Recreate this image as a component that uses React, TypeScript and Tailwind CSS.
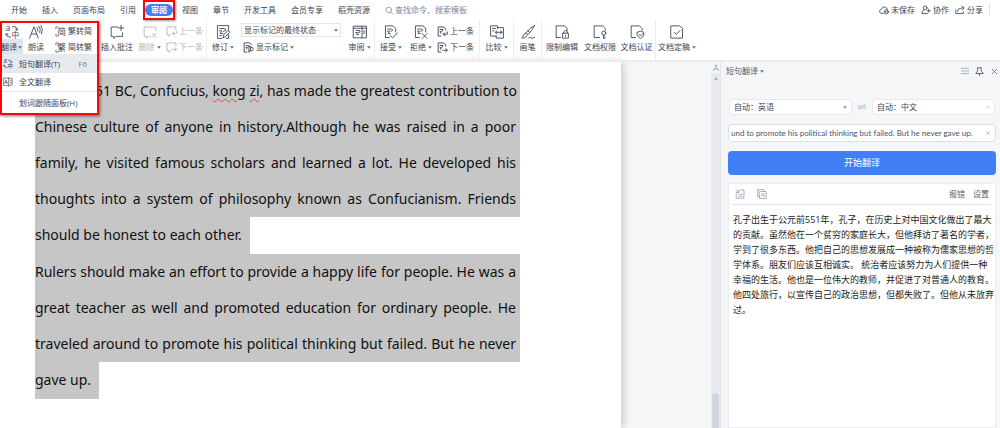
import { useState } from "react";
import type { ReactNode } from "react";
import { X } from "lucide-react";

type IconProps = { children: ReactNode; className?: string };

// all ribbon icons share a 48 unit grid
const Icon = ({ children, className = "h-[14px] w-[14px]" }: IconProps) => (
    <svg
        viewBox="0 0 48 48"
        className={`shrink-0 overflow-visible ${className}`}
        fill="none"
        stroke="currentColor"
        strokeWidth="3"
        strokeLinecap="round"
        strokeLinejoin="round"
        aria-hidden="true"
    >
        {children}
    </svg>
);

const Glyph = ({ x, y, size, children }: { x: number; y: number; size: number; children: string }) => (
    <text x={x} y={y} fontSize={size} fill="currentColor" stroke="none">
        {children}
    </text>
);

const Caret = ({ className = "text-[#6b7385]" }: { className?: string }) => (
    <svg viewBox="0 0 8 5" className={`h-[3px] w-1 shrink-0 ${className}`} fill="currentColor" aria-hidden="true">
        <path d="M0 0h8L4 5z" />
    </svg>
);

const TranslateIcon = ({ className }: { className?: string }) => (
    <Icon className={className}>
        <Glyph x={2} y={21} size={30}>a</Glyph>
        <Glyph x={22} y={45} size={26}>中</Glyph>
        <path d="M25 6h9q6 0 6 7v5M35 13l5 5 5-5M20 41h-7q-7 0-7-7v-5M1 34l5-5 5 5" />
    </Icon>
);

const ReadIcon = () => (
    <Icon>
        <path d="M2 45L17 6l15 39M8 31h18" />
        <path d="M27 8q5 5 3 13M34 4q8 9 3 22M41 2q9 12 2 28" />
    </Icon>
);

const BracketIcon = ({ char }: { char: string }) => (
    <Icon className="h-[11px] w-[11px]">
        <Glyph x={10} y={40} size={38}>{char}</Glyph>
        <path d="M12 4H4v8M4 36v8h8" />
    </Icon>
);

const CommentAddIcon = () => (
    <Icon>
        <path d="M27 7H4v32h9v7l8-7h22V27M38 1v18M29 10h18" />
    </Icon>
);

const CommentDeleteIcon = () => (
    <Icon>
        <path d="M44 20V7H4v32h9v7l8-7h5M32 29l13 13M45 29L32 42" />
    </Icon>
);

const CommentStepIcon = ({ next }: { next?: boolean }) => (
    <Icon className="h-[11px] w-[11px]">
        <path d="M43 18V4H4v34h9v7l7-7" strokeWidth="4" />
        <path d={next ? "M26 32h20M39 25l7 7-7 7" : "M46 24v9H28M35 26l-7 7 7 7"} strokeWidth="4" />
    </Icon>
);

const ReviseIcon = () => (
    <Icon>
        <path d="M20 46H5V2h38v16M13 12h15q6 0 5 7l-8 3M12 20h8l-6 9h10M13 36h6M24 43l3-10 14-14 6 6-14 14zM43 33v13h-8" />
    </Icon>
);

const ShowMarkupIcon = () => (
    <Icon className="h-[11px] w-[11px]">
        <path d="M17 44H5V4h24l9 9M13 16h12M13 24h6l-4 7" strokeWidth="4" />
        <path d="M26 19v26M26 19h7v20h-7M35 22q11 1 10 10-1 7-9 7" strokeWidth="4" />
    </Icon>
);

const ReviewPaneIcon = () => (
    <Icon>
        <path d="M2 4h29v40H2zM31 4h15v40H31M2 11h44M10 19h12q3 0 2 5l-5 2M9 26h7l-4 7h7M36 21h5M36 28h5" />
    </Icon>
);

const RevisionIcon = ({ mark }: { mark: "accept" | "reject" }) => (
    <Icon>
        <path d="M18 43H5V3h26l9 9v12M13 14h13q4 0 3 5l-5 3M12 21h7l-5 8h7" />
        <path d={mark === "accept" ? "M21 36l9 8 16-17" : "M28 29l17 17M45 29L28 46"} />
    </Icon>
);

const RevisionStepIcon = ({ next }: { next?: boolean }) => (
    <Icon className="h-[11px] w-[11px]">
        <path d="M17 44H5V4h24l9 9v5M13 15h13l-4 8M13 25h6l-3 7" strokeWidth="4" />
        <path d={next ? "M25 36h20M38 29l7 7-7 7" : "M45 26v10H27M34 29l-7 7 7 7"} strokeWidth="4" />
    </Icon>
);

const CompareIcon = () => (
    <Icon>
        <path d="M21 38H2V3h24v8M26 9h20v36H21v-8M9 12h10M9 20h5M19 25h22M24 20l-6 5 6 5M36 20l6 5-6 5" />
    </Icon>
);

const BrushIcon = () => (
    <Icon>
        <path d="M46 2Q32 8 17 27l7 6Q39 17 46 2zM16 28q-8 2-8 9-1 5-6 7 15 3 19-9M26 44q4-5 8 0 4 4 8 0l5-2M23 20l7 6" />
    </Icon>
);

const LockDocIcon = () => (
    <Icon>
        <path d="M19 43H4V3h29l8 8v9M27 28h19v17H27zM30 28v-5q6-9 13 0v5M36 35v4" />
    </Icon>
);

const KeyDocIcon = () => (
    <Icon>
        <path d="M22 43H4V3h29l9 9v6M36 35v11h5M36 41h5" />
        <circle cx="37" cy="28" r="7" />
    </Icon>
);

const ShieldDocIcon = () => (
    <Icon>
        <path d="M19 43H4V3h29l9 9v5M25 25l11-4 11 4v9q-2 8-11 12-9-4-11-12zM31 32l5 5 7-7" />
    </Icon>
);

const FinalDocIcon = () => (
    <Icon>
        <path d="M4 3h30l9 9v33H4zM15 25l7 7 12-13" />
    </Icon>
);

const PageIcon = () => (
    <Icon className="h-[10px] w-[10px]">
        <path d="M25 5H3v36h22M27 2v44M31 8h13v31H31" />
        <path d="M9 32l6-18 6 18M11 26h8M34 18h6M34 27h6" />
    </Icon>
);

type BigProps = { icon: ReactNode; label: string; caret?: boolean; className: string };

const BigButton = ({ icon, label, caret, className }: BigProps) => (
    <button className={`flex shrink-0 flex-col items-center justify-start pt-[5px] ${className}`}>
        {icon}
        <span className="mt-0.5 flex h-3 items-center gap-0.5 whitespace-nowrap">
            {label}
            {caret && <Caret />}
        </span>
    </button>
);

const SmallButton = ({ icon, label, caret }: { icon: ReactNode; label: string; caret?: boolean }) => (
    <button className="flex h-4 items-center gap-0.5 whitespace-nowrap">
        {icon}
        {label}
        {caret && <Caret />}
    </button>
);

const tabs = ["开始", "插入", "页面布局", "引用", "审阅", "视图", "章节", "开发工具", "会员专享", "稻壳资源"];

const translation = [
    "孔子出生于公元前551年，孔子，在历史上对中国文化做出了最大",
    "的贡献。虽然他在一个贫穷的家庭长大，但他拜访了著名的学者，",
    "学到了很多东西。他把自己的思想发展成一种被称为儒家思想的哲",
    "学体系。朋友们应该互相诚实。 统治者应该努力为人们提供一种",
    "幸福的生活。他也是一位伟大的教师，并促进了对普通人的教育。",
    "他四处旅行，以宣传自己的政治思想，但都失败了。但他从未放弃",
    "过。",
];

const Misspelt = ({ children }: { children: string }) => (
    <span className="underline decoration-[#e04848] decoration-wavy decoration-1 underline-offset-2">{children}</span>
);

const paragraphs: ReactNode[][] = [
    [
        <>
            <span className="inline-block w-[60px]" />
            51 BC, Confucius, <Misspelt>kong</Misspelt> <Misspelt>zi</Misspelt>, has made the greatest contribution to
        </>,
        "Chinese culture of anyone in history.Although he was raised in a poor",
        "family, he visited famous scholars and learned a lot. He developed his",
        "thoughts into a system of philosophy known as Confucianism. Friends",
        "should be honest to each other.",
    ],
    [
        "Rulers should make an effort to provide a happy life for people. He was a",
        "great teacher as well and promoted education for ordinary people. He",
        "traveled around to promote his political thinking but failed. But he never",
        "gave up.",
    ],
];

const TabBar = ({ active, onSelect }: { active: string; onSelect: (tab: string) => void }) => (
    <div className="flex h-5 items-center justify-between pl-[11px] pr-2.5">
        <nav className="flex items-center gap-[15px]">
            {tabs.map((tab) =>
                tab === active ? (
                    <div key={tab} className="relative -mx-1.5">
                        <button className="flex h-3 items-center rounded-full bg-[#417ff9] px-1.5 font-bold text-white">{tab}</button>
                        <span className="pointer-events-none absolute -inset-x-0.5 -inset-y-1 border-2 border-[#f50a0a] shadow-[1px_1px_2px_#0006]" />
                    </div>
                ) : (
                    <button key={tab} onClick={() => onSelect(tab)}>{tab}</button>
                )
            )}
            <label className="flex items-center gap-px text-[#7d879c]">
                <Icon className="h-[9px] w-[9px]">
                    <circle cx="20" cy="21" r="15" strokeWidth="4" />
                    <path d="M31 33l11 11" strokeWidth="4" />
                </Icon>
                <input className="w-20 bg-transparent outline-none placeholder:text-[#7d879c]" placeholder="查找命令、搜索模板" aria-label="查找命令" />
            </label>
        </nav>
        <div className="flex items-center gap-1.5 whitespace-nowrap">
            <button className="flex items-center gap-0.5">
                <Icon className="h-[10px] w-[10px]">
                    <path d="M21 40H11Q1 38 3 28q2-7 9-8Q16 7 28 9q12 3 12 14" strokeWidth="4" />
                    <circle cx="35" cy="33" r="10" strokeWidth="4" />
                    <path d="M30 33h10" strokeWidth="4" />
                </Icon>
                未保存
            </button>
            <button className="flex items-center gap-0.5">
                <Icon className="h-[10px] w-[10px]">
                    <circle cx="20" cy="14" r="9" strokeWidth="4" />
                    <path d="M14 23q-10 5-10 18h27M37 20v15M30 28h15" strokeWidth="4" />
                </Icon>
                协作
            </button>
            <button className="flex items-center gap-0.5 border-r border-[#dfe1e6] pr-1.5">
                <Icon className="h-[10px] w-[10px]">
                    <path d="M4 23v18h36v-9M11 31q3-17 22-17h9M34 5l10 9-10 9" strokeWidth="4" />
                </Icon>
                分享
            </button>
        </div>
    </div>
);

const TranslateMenu = () => (
    <div className="absolute left-0 top-[34px] z-10 w-[97px] bg-white text-[#3c4353]">
        <button className="flex h-[19px] w-full items-center gap-1.5 bg-[#e6e9ee] pl-[3px] pr-2.5">
            <TranslateIcon className="h-[10px] w-[10px]" />
            <span className="flex-1 text-left">短句翻译(T)</span>
            <span className="text-[#7d8494]">F6</span>
        </button>
        <button className="flex h-[19px] w-full items-center gap-1.5 border-b border-[#e4e6ea] pl-[3px]">
            <PageIcon />
            全文翻译
        </button>
        <button className="flex h-[22px] w-full items-center pl-[19px]">划词跟随面板(H)</button>
    </div>
);

const Ribbon = () => (
    <div className="relative flex h-[42px] border-b-2 border-[#ececee]">
        <button className="flex w-[23px] shrink-0 flex-col items-center pt-[5px]">
            <TranslateIcon />
            <span className="flex h-4 w-full items-center gap-px whitespace-nowrap bg-[#dfe3ea] pl-px">
                翻译
                <Caret />
            </span>
        </button>
        <BigButton icon={<ReadIcon />} label="朗读" className="w-[26px]" />
        <div className="flex w-[49px] shrink-0 flex-col pl-1.5 pt-[3px]">
            <SmallButton icon={<BracketIcon char="简" />} label="繁转简" />
            <SmallButton icon={<BracketIcon char="繁" />} label="简转繁" />
        </div>
        <BigButton icon={<CommentAddIcon />} label="插入批注" className="w-[38px]" />
        <BigButton icon={<CommentDeleteIcon />} label="删除" caret className="w-[27px] text-[#b4b6bc]" />
        <div className="flex w-[44px] shrink-0 flex-col border-r border-[#ededf0] pl-[3px] pt-[3px] text-[#b4b6bc]">
            <SmallButton icon={<CommentStepIcon />} label="上一条" />
            <SmallButton icon={<CommentStepIcon next />} label="下一条" />
        </div>
        <BigButton icon={<ReviseIcon />} label="修订" caret className="w-[32px]" />
        <div className="flex w-[106px] shrink-0 flex-col pl-0.5 pt-[3px]">
            <div className="grid w-[100px] items-center border border-[#e3e5ea]">
                <select className="col-start-1 row-start-1 h-3 appearance-none bg-transparent pl-0.5 outline-none" aria-label="标记状态">
                    <option>显示标记的最终状态</option>
                </select>
                <span className="pointer-events-none col-start-1 row-start-1 mr-0.5 justify-self-end"><Caret /></span>
            </div>
            <div className="pl-0.5 pt-0.5">
                <SmallButton icon={<ShowMarkupIcon />} label="显示标记" caret />
            </div>
        </div>
        <BigButton icon={<ReviewPaneIcon />} label="审阅" caret className="w-[30px] border-r border-[#ededf0]" />
        <BigButton icon={<RevisionIcon mark="accept" />} label="接受" caret className="w-[32px]" />
        <BigButton icon={<RevisionIcon mark="reject" />} label="拒绝" caret className="w-[28px]" />
        <div className="flex w-[45px] shrink-0 flex-col border-r border-[#ededf0] pl-0.5 pt-[3px]">
            <SmallButton icon={<RevisionStepIcon />} label="上一条" />
            <SmallButton icon={<RevisionStepIcon next />} label="下一条" />
        </div>
        <BigButton icon={<CompareIcon />} label="比较" caret className="w-[34px] border-r border-[#ededf0]" />
        <BigButton icon={<BrushIcon />} label="画笔" className="w-[28px] border-r border-[#ededf0]" />
        <BigButton icon={<LockDocIcon />} label="限制编辑" className="w-[40px]" />
        <BigButton icon={<KeyDocIcon />} label="文档权限" className="w-[36px]" />
        <BigButton icon={<ShieldDocIcon />} label="文档认证" className="w-[38px] border-r border-[#ededf0]" />
        <BigButton icon={<FinalDocIcon />} label="文档定稿" caret className="w-[42px]" />
        <TranslateMenu />
        <span className="pointer-events-none absolute left-0 top-px z-20 h-[94px] w-[99px] border-2 border-[#f50a0a] shadow-[1px_1px_3px_#0008]" />
    </div>
);

const Document = () => (
    <div className="flex-1 bg-[#f5f6f8]">
        <div className="mr-[90px] h-full bg-white pl-[35px] pt-[11px] shadow-[2px_0_8px_#0003]">
            {paragraphs.map((lines, p) => (
                <div key={p} className="w-[485px] font-['Noto_Sans',sans-serif] text-[14px] leading-9 text-[#111]">
                    {lines.map((line, i) =>
                        i === lines.length - 1 ? (
                            <p key={i} className="w-fit bg-[#c6c6c6] pb-px pr-2">{line}</p>
                        ) : (
                            <p key={i} className="whitespace-nowrap bg-[#c6c6c6] pr-1 [text-align-last:justify]">{line}</p>
                        )
                    )}
                </div>
            ))}
        </div>
    </div>
);

const ScrollBar = () => (
    <div className="flex w-[9px] shrink-0 flex-col items-center bg-[#e8eaf0] text-[#98a0b4]">
        <div className="flex h-[11px] w-full items-center justify-center bg-[#f5f6f8]">
            <Icon className="h-[6px] w-[6px]">
                <path d="M14 4h20M24 4v20M14 24h20M4 44V34h40v10" strokeWidth="6" />
            </Icon>
        </div>
        <div className="flex h-3 rotate-180 items-center"><Caret className="text-[#98a0b4]" /></div>
        <div className="mt-auto h-[35px] w-[7px] rounded-t-full bg-[#d3d6df]" />
    </div>
);

const LanguageSelect = ({ label, value, muted }: { label: string; value: string; muted?: boolean }) => (
    <div className="grid flex-1 items-center rounded-sm border border-[#e6e8ee] bg-white">
        <select aria-label={label} className="col-start-1 row-start-1 h-[14px] appearance-none bg-transparent pl-1 outline-none">
            <option>{value}</option>
        </select>
        <span className="pointer-events-none col-start-1 row-start-1 mr-1 justify-self-end">
            <Caret className={muted ? "text-[#d5d8e0]" : "text-[#8a92a6]"} />
        </span>
    </div>
);

const TranslatePanel = () => {
    const [text, setText] = useState("und to promote his political thinking but failed. But he never gave up.");

    return (
        <aside className="flex w-[280px] shrink-0 flex-col border-l border-[#e3e5ea] bg-[#f5f6f8]">
            <div className="flex h-[18px] items-center justify-between pl-[5px] pr-px text-[#555d6e]">
                <button className="flex items-center gap-0.5">
                    短句翻译
                    <Caret />
                </button>
                <div className="flex items-center gap-1.5">
                    <button aria-label="菜单">
                        <Icon className="h-2 w-2 text-[#8a92a6]">
                            <path d="M2 8h44M2 24h44M2 40h44" strokeWidth="4" />
                        </Icon>
                    </button>
                    <button aria-label="固定">
                        <Icon className="h-[9px] w-[9px]">
                            <path d="M15 4h18v15q0 6 10 12v4H5v-4q10-6 10-12zM24 35v10" strokeWidth="5" />
                        </Icon>
                    </button>
                    <button aria-label="关闭"><X className="h-[9px] w-[9px]" /></button>
                </div>
            </div>

            <div className="flex flex-1 flex-col pl-[7px] pr-1 pt-[19px]">
                <div className="flex items-center gap-1.5 px-px">
                    <LanguageSelect label="源语言" value="自动：英语" />
                    <button aria-label="交换语言" className="text-[#98a0b4]">
                        <Icon className="h-2 w-2">
                            <path d="M2 18h44L34 7M46 30H2l12 11" strokeWidth="4" />
                        </Icon>
                    </button>
                    <LanguageSelect label="目标语言" value="自动：中文" muted />
                </div>
                <div className="mt-[9px] flex h-[18px] items-center rounded-sm border border-[#dcdfe8] bg-white pl-0.5 pr-1">
                    <input
                        aria-label="原文"
                        className="min-w-0 flex-1 font-['Lato',sans-serif] text-[#4a5468] outline-none"
                        value={text}
                        onChange={(e) => setText(e.target.value)}
                    />
                    <button aria-label="清空" onClick={() => setText("")}><X className="h-1.5 w-1.5 text-[#8a92a6]" /></button>
                </div>
                <button className="mt-[9px] h-6 rounded-sm bg-[#417ff9] text-[9px] text-white">开始翻译</button>

                <div className="mt-2 flex-1 border border-[#eceef2] bg-white px-1">
                    <div className="flex h-[21px] items-center gap-3 border-b border-[#dcdfe6] px-0.5 text-[#555d6e]">
                        <button aria-label="插入译文" className="text-[#98a0b4]">
                            <Icon className="h-[10px] w-[10px]">
                                <path d="M25 5h18v39H6V23M4 4l13 13M17 6v11H6M18 25h17M18 34h17" strokeWidth="4" />
                            </Icon>
                        </button>
                        <button aria-label="复制译文" className="flex-1 text-[#98a0b4]">
                            <Icon className="h-[10px] w-[10px]">
                                <path d="M12 36H3V3h30v8M13 12h31v33H13zM21 24h15M21 33h15" strokeWidth="4" />
                            </Icon>
                        </button>
                        <button>报错</button>
                        <button className="-ml-1">设置</button>
                    </div>
                    <p className="-mr-1 whitespace-nowrap pt-[7px] text-[9px] leading-[15px] text-[#222]">
                        {translation.map((line) => (
                            <span key={line} className="block">{line}</span>
                        ))}
                    </p>
                </div>
            </div>
        </aside>
    );
};

const App = () => {
    const [active, setActive] = useState("审阅");

    return (
        <div className="flex min-h-screen flex-col bg-white font-['Open_Sans','Noto_Sans_CJK_SC',sans-serif] text-[8px] leading-3 text-[#3c4353]">
            <TabBar active={active} onSelect={setActive} />
            <Ribbon />
            <main className="flex flex-1">
                <Document />
                <ScrollBar />
                <TranslatePanel />
            </main>
        </div>
    );
};

export default App;
